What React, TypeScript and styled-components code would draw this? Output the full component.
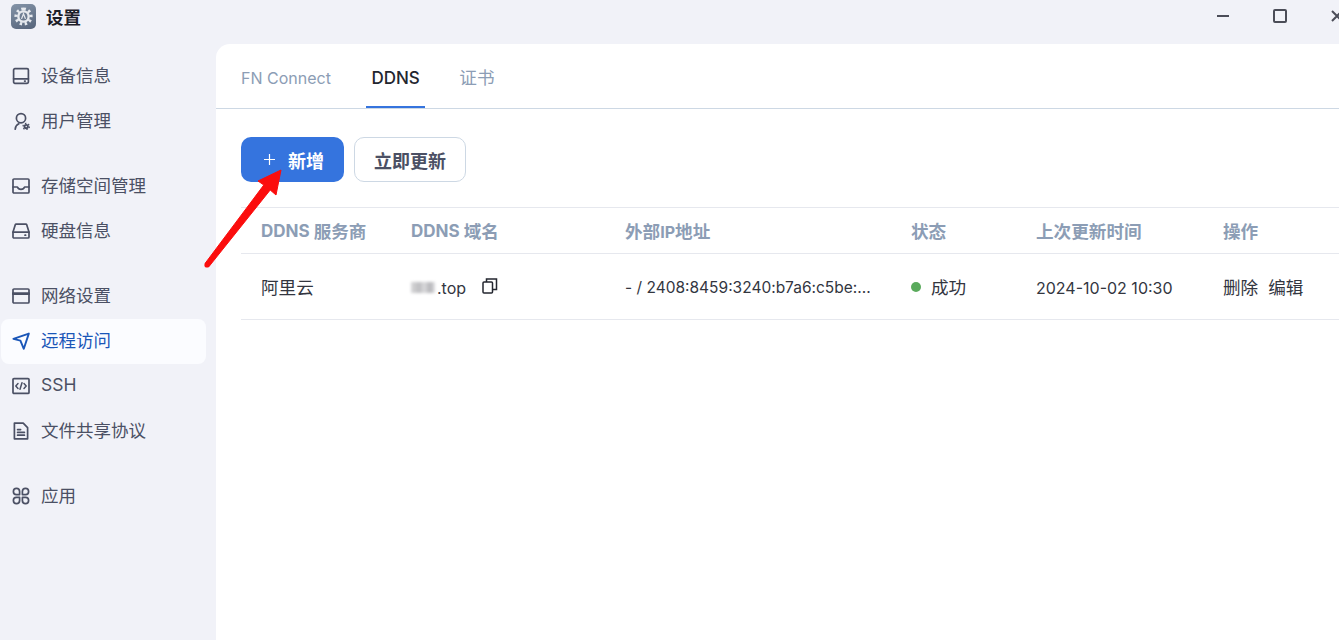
import React from 'react';
import styled, { createGlobalStyle } from 'styled-components';

const GlobalStyle = createGlobalStyle`
  html, body {
    margin: 0;
    padding: 0;
    height: 100%;
    overflow: hidden;
    background: #f1f2f8;
    font-family: Inter, "Noto Sans CJK SC", sans-serif;
  }
  #root {
    height: 100%;
  }
`;

const Window = styled.div`
  position: relative;
  display: flex;
  flex-direction: column;
  width: 1339px;
  height: 640px;
  overflow: hidden;
  background: #f1f2f8;
`;

const TitleBar = styled.div`
  display: flex;
  align-items: center;
  flex: none;
  height: 44px;
  padding: 0 0 11px 11px;
  box-sizing: border-box;
`;

const AppIcon = styled.div`
  display: flex;
  align-items: center;
  justify-content: center;
  width: 25px;
  height: 25px;
  border-radius: 5px;
  background: linear-gradient(160deg, #8494a8, #56647a);
`;

const AppTitle = styled.span`
  margin-left: 10px;
  padding-top: 2px;
  font-size: 17.5px;
  font-weight: 700;
  line-height: 25px;
  color: #1d2029;
`;

const WindowButtons = styled.div`
  display: flex;
  align-items: center;
  margin: -1px -4px 0 auto;
  gap: 44px;
`;

const Body = styled.div`
  display: flex;
  flex: 1;
  min-height: 0;
`;

const Sidebar = styled.nav`
  display: flex;
  flex-direction: column;
  flex: none;
  width: 216px;
  padding: 10px 10px 0 1px;
  box-sizing: border-box;
`;

const NavGroup = styled.div`
  display: flex;
  flex-direction: column;
  margin-bottom: 20px;
`;

const NavItem = styled.div<{ $active?: boolean }>`
  display: flex;
  align-items: center;
  gap: 11px;
  height: 45px;
  padding-left: 11px;
  border-radius: 8px;
  font-size: 17.5px;
  background: ${(props) => (props.$active ? '#fbfcff' : 'transparent')};
  color: ${(props) => (props.$active ? '#1a56b8' : '#4b5064')};
`;

const NavLabel = styled.span`
  position: relative;
  top: -2px;
`;

const NavIcon = styled.svg`
  flex: none;
  width: 18px;
  height: 18px;
  margin-top: -1px;
  fill: none;
  stroke: currentColor;
  stroke-width: 1.7;
  stroke-linecap: round;
  stroke-linejoin: round;
`;

const Main = styled.main`
  flex: 1;
  min-width: 0;
  background: #fff;
  border-top-left-radius: 14px;
`;

const Tabs = styled.div`
  display: flex;
  height: 64px;
  padding-left: 25px;
  gap: 40.5px;
  border-bottom: 1px solid #cdd8e4;
`;

const Tab = styled.div<{ $active?: boolean }>`
  display: flex;
  align-items: center;
  position: relative;
  height: 64px;
  padding-top: 4px;
  box-sizing: border-box;
  font-size: ${(props) => (props.$active ? '17px' : '16px')};
  font-weight: ${(props) => (props.$active ? 500 : 400)};
  color: ${(props) => (props.$active ? '#23262f' : '#8c9db5')};

  &::after {
    content: '';
    display: ${(props) => (props.$active ? 'block' : 'none')};
    position: absolute;
    left: -5px;
    right: -5px;
    bottom: 0;
    height: 2px;
    background: #3574de;
  }
`;

const Han = styled.span`
  font-size: 1.1em;
  line-height: 1;
`;

const TabHan = styled(Han)`
  margin-left: -1px;
`;

const HeadLatin = styled.span`
  font-size: 17px;
  line-height: 1;
`;

const Content = styled.div`
  padding: 28px 0 0 25px;
`;

const Toolbar = styled.div`
  display: flex;
  gap: 10px;
  margin-bottom: 25px;
`;

const PrimaryButton = styled.button`
  display: flex;
  align-items: center;
  justify-content: center;
  gap: 13px;
  width: 103px;
  height: 45px;
  padding: 0 0 0 3px;
  border: none;
  border-radius: 10px;
  background: #3574de;
  color: #fff;
  font-family: inherit;
  font-size: 18px;
  font-weight: 700;
`;

const SecondaryButton = styled.button`
  width: 112px;
  height: 45px;
  padding: 0;
  border: 1px solid #cdd8e4;
  border-radius: 10px;
  background: #fff;
  color: #4b5064;
  font-family: inherit;
  font-size: 18px;
  font-weight: 700;
`;

const Row = styled.div<{ $head?: boolean }>`
  display: grid;
  grid-template-columns: 150px 214px 286px 125px 187px 1fr;
  align-items: center;
  box-sizing: border-box;
  height: ${(props) => (props.$head ? '47px' : '66px')};
  padding: 2px 0 0 20px;
  border-top: ${(props) => (props.$head ? '1px solid #e6e8ee' : 'none')};
  border-bottom: 1px solid #e6e8ee;
  font-size: 16px;
  font-weight: ${(props) => (props.$head ? 700 : 400)};
  color: ${(props) => (props.$head ? '#8c9db5' : '#33363f')};
`;

const Cell = styled.div`
  display: flex;
  align-items: center;
  white-space: pre;
`;

const AddressCell = styled(Cell)`
  font-size: 15.5px;
`;

const Blurred = styled.span`
  display: inline-block;
  width: 24px;
  height: 11px;
  margin-right: 2px;
  background: linear-gradient(90deg, #d6d6d8 0%, #bdbdc0 35%, #dadadc 55%, #b4b4b8 80%, #e0e0e2 100%);
  filter: blur(1.5px);
`;

const CopyIcon = styled.svg`
  width: 16px;
  height: 16px;
  margin-left: 16px;
  margin-top: -3px;
  fill: none;
  stroke: #23262f;
  stroke-width: 1.5;
`;

const StatusDot = styled.span`
  width: 10px;
  height: 10px;
  margin-right: 10px;
  margin-top: -2px;
  border-radius: 50%;
  background: #5aaa5c;
`;

const Action = styled.span`
  margin-right: 10px;
`;

const ArrowOverlay = styled.svg`
  position: absolute;
  left: 195px;
  top: 165px;
  width: 100px;
  height: 110px;
`;

const icons: Record<string, React.ReactNode> = {
  device: (
    <>
      <rect x="1.6" y="1.6" width="14.8" height="14.8" rx="1.3" />
      <path d="M1.6 11.8h14.8M12.6 14.1h.6" />
    </>
  ),
  user: (
    <>
      <circle cx="9" cy="6.2" r="4.6" />
      <path d="M3.2 17.2c.2-2.8 1.6-4.5 3.6-5.4" />
      <circle cx="14.2" cy="14.6" r="1.7" strokeWidth="1.9" />
      <circle cx="14.2" cy="14.6" r="3.2" strokeWidth="1.2" strokeDasharray="1.5 1.85" strokeLinecap="butt" />
    </>
  ),
  inbox: (
    <>
      <rect x="1" y="2" width="16" height="14" rx="1" />
      <path d="M1 10h4.4c.6 1.7 2 2.4 3.6 2.4s3-.7 3.6-2.4H17" />
    </>
  ),
  disk: (
    <>
      <path d="M4.2 2.2h9.6c.5 0 .8.2 1 .7L17 10v5a1 1 0 0 1-1 1H2a1 1 0 0 1-1-1v-5l2.2-7.1c.2-.5.5-.7 1-.7z" />
      <path d="M1 10.2h16M13 13.2h.6" />
    </>
  ),
  network: (
    <>
      <rect x="1" y="2" width="16" height="14" rx="1" />
      <path d="M1 6.6h16" strokeWidth="2.6" />
    </>
  ),
  send: <path d="M1.4 6.8 16.8 1.6 11.8 16.8 8.4 8.6z" strokeWidth="1.9" />,
  ssh: (
    <>
      <rect x="1" y="1.6" width="16" height="14.8" rx="1" />
      <path d="M6 6.6 3.8 9 6 11.4M12 6.6 14.2 9 12 11.4M10 5.8 8 12.2" strokeWidth="1.5" />
    </>
  ),
  file: (
    <>
      <path d="M2.4 1.2h8.8l4.4 4.4v11.2H2.4z" />
      <path d="M5.6 7.6h3M5.6 10.4h6.8M5.6 13.2h6.8" />
    </>
  ),
  apps: (
    <>
      <path d="M7.6 7.6H4.4a3.1 3.1 0 1 1 3.2-3.2zM10.4 7.6V4.4a3.1 3.1 0 1 1 3.2 3.2zM7.6 10.4v3.2a3.1 3.1 0 1 1-3.2-3.2zM10.4 10.4h3.2a3.1 3.1 0 1 1-3.2 3.2z" />
    </>
  ),
};

const navGroups = [
  [
    { icon: 'device', label: '设备信息' },
    { icon: 'user', label: '用户管理' },
  ],
  [
    { icon: 'inbox', label: '存储空间管理' },
    { icon: 'disk', label: '硬盘信息' },
  ],
  [
    { icon: 'network', label: '网络设置' },
    { icon: 'send', label: '远程访问', active: true },
    { icon: 'ssh', label: 'SSH' },
    { icon: 'file', label: '文件共享协议' },
  ],
  [{ icon: 'apps', label: '应用' }],
];

export default function App() {
  return (
    <Window>
      <GlobalStyle />
      <TitleBar>
        <AppIcon>
          <svg width="19" height="19" viewBox="0 0 24 24" fill="none" stroke="#e6e9ee" strokeWidth="3">
            <circle cx="12" cy="12" r="6.5" />
            <path strokeDasharray="3 3.28" strokeWidth="4" d="M12 2.5a9.5 9.5 0 1 1 0 19 9.5 9.5 0 1 1 0-19" />
            <path strokeWidth="1.6" d="M9.5 15 12 8.5l2.5 6.5" />
          </svg>
        </AppIcon>
        <AppTitle>设置</AppTitle>
        <WindowButtons>
          <svg width="12" height="2" viewBox="0 0 12 2">
            <rect width="12" height="2" fill="#4b4d58" />
          </svg>
          <svg width="14" height="14" viewBox="0 0 14 14" fill="none" stroke="#4b4d58" strokeWidth="2">
            <rect x="1" y="1" width="12" height="12" rx="1" />
          </svg>
          <svg width="12" height="12" viewBox="0 0 12 12" fill="none" stroke="#4b4d58" strokeWidth="2">
            <path d="M1 1l10 10M11 1 1 11" />
          </svg>
        </WindowButtons>
      </TitleBar>
      <Body>
        <Sidebar>
          {navGroups.map((group, i) => (
            <NavGroup key={i}>
              {group.map((item) => (
                <NavItem key={item.label} $active={'active' in item}>
                  <NavIcon viewBox="0 0 18 18">{icons[item.icon]}</NavIcon>
                  <NavLabel>{item.label}</NavLabel>
                </NavItem>
              ))}
            </NavGroup>
          ))}
        </Sidebar>
        <Main>
          <Tabs>
            <Tab>FN Connect</Tab>
            <Tab $active>DDNS</Tab>
            <Tab>
              <TabHan>证书</TabHan>
            </Tab>
          </Tabs>
          <Content>
            <Toolbar>
              <PrimaryButton>
                <svg width="11" height="11" viewBox="0 0 11 11" stroke="#fff" strokeWidth="1.2">
                  <path d="M5.5 0v11M0 5.5h11" />
                </svg>
                新增
              </PrimaryButton>
              <SecondaryButton>立即更新</SecondaryButton>
            </Toolbar>
            <Row $head>
              <Cell>
                <HeadLatin>DDNS </HeadLatin>
                <Han>服务商</Han>
              </Cell>
              <Cell>
                <HeadLatin>DDNS </HeadLatin>
                <Han>域名</Han>
              </Cell>
              <Cell>
                <Han>外部</Han>IP<Han>地址</Han>
              </Cell>
              <Cell>
                <Han>状态</Han>
              </Cell>
              <Cell>
                <Han>上次更新时间</Han>
              </Cell>
              <Cell>
                <Han>操作</Han>
              </Cell>
            </Row>
            <Row>
              <Cell>
                <Han>阿里云</Han>
              </Cell>
              <Cell>
                <Blurred />
                .top
                <CopyIcon viewBox="0 0 16 16">
                  <rect x="1" y="4" width="9.5" height="11" rx="1" />
                  <path d="M4.5 4V1h10v10.5h-4" />
                </CopyIcon>
              </Cell>
              <AddressCell>- / 2408:8459:3240:b7a6:c5be:...</AddressCell>
              <Cell>
                <StatusDot />
                <Han>成功</Han>
              </Cell>
              <Cell>2024-10-02 10:30</Cell>
              <Cell>
                <Action>
                  <Han>删除</Han>
                </Action>
                <Action>
                  <Han>编辑</Han>
                </Action>
              </Cell>
            </Row>
          </Content>
        </Main>
      </Body>
      <ArrowOverlay viewBox="0 0 100 110">
        <path
          d="M10 98.5 68.8 20 63 16 86 5 81 30 75.2 25 14 101.5Z"
          fill="#fb0d0d"
          stroke="#fb0d0d"
          strokeWidth="1"
          strokeLinejoin="round"
        />
        <circle cx="12" cy="100" r="2.6" fill="#fb0d0d" />
      </ArrowOverlay>
    </Window>
  );
}
